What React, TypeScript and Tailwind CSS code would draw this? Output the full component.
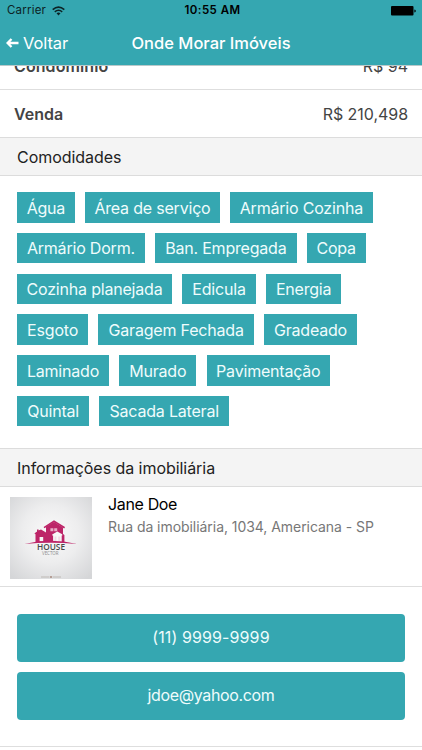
const amenities = [
  { name: "Água", width: "w-[57.8px]" },
  { name: "Área de serviço", width: "w-[134.8px]" },
  { name: "Armário Cozinha", width: "w-[142.5px]" },
  { name: "Armário Dorm.", width: "w-[127.8px]" },
  { name: "Ban. Empregada", width: "w-[141.5px]" },
  { name: "Copa", width: "w-[58.8px]" },
  { name: "Cozinha planejada", width: "w-[155px]" },
  { name: "Edicula", width: "w-[73.5px]" },
  { name: "Energia", width: "w-[75.2px]" },
  { name: "Esgoto", width: "w-[71.2px]" },
  { name: "Garagem Fechada", width: "w-[155.4px]" },
  { name: "Gradeado", width: "w-[92.8px]" },
  { name: "Laminado", width: "w-[92px]" },
  { name: "Murado", width: "w-[77px]" },
  { name: "Pavimentação", width: "w-[123.6px]" },
  { name: "Quintal", width: "w-[72.2px]" },
  { name: "Sacada Lateral", width: "w-[129.5px]" },
];

function WifiIcon() {
  return (
    <svg viewBox="0 0 13 10" className="mb-px h-2.5 w-[13px]" fill="none" stroke="currentColor" strokeWidth="1.6">
      <path d="M0.7 3.6Q6.5 -1.4 12.3 3.6" />
      <path d="M2.8 5.9Q6.5 2.6 10.2 5.9" />
      <path d="M4.5 7.3Q6.5 5.7 8.5 7.3L6.5 9.5Z" fill="currentColor" stroke="none" />
    </svg>
  );
}

function HouseLogo() {
  return (
    <svg viewBox="0 0 82 82" className="h-[82px] w-[82px] shrink-0">
      <defs>
        <radialGradient id="paper" cx="50%" cy="45%" r="70%">
          <stop offset="0" stopColor="#fafafa" />
          <stop offset="0.5" stopColor="#ededee" />
          <stop offset="1" stopColor="#d5d6d8" />
        </radialGradient>
      </defs>
      <rect width="82" height="82" fill="url(#paper)" />
      {/* main house */}
      <path d="M36 29.8L44 24.9L53 30.5V45.5H36Z" fill="#bd2568" />
      <path d="M34 30.6L44 24.3L54.6 30.8" fill="none" stroke="#bd2568" strokeWidth="1.6" />
      {/* left annex */}
      <path d="M25.5 45.5V36L27 34.4V32.6H28.6V33.6L31 32.4L36 35.6V45.5Z" fill="#bd2568" />
      <path d="M24.8 36.8L30.5 33.6L35.5 36.8" fill="none" stroke="#bd2568" strokeWidth="1.2" />
      {/* windows */}
      <path d="M40.4 31.3H43.4V34.2H40.4ZM44.2 31.3H47.2V34.2H44.2Z" fill="#e7adc6" />
      <path d="M29.6 40H33.2V44.3H29.6Z" fill="#f5f5f5" />
      {/* garage */}
      <path d="M42.2 37.4L47.3 34.5L52.6 37.4V38.4H51.7V45H43.1V38.4H42.2Z" fill="#f8f8f8" />
      <path d="M44.5 39.6H46.4V44.8H44.5ZM48.2 39.6H50.2V44.8H48.2Z" fill="#f1dce5" />
      <path d="M52.5 36.5L54.4 38V45.5H52.5Z" fill="#bd2568" />
      {/* ground */}
      <path d="M14.5 47Q40.5 40.5 67 47Q40.5 43.8 14.5 47Z" fill="#bd2568" />
      <text x="27" y="53.4" textLength="28" lengthAdjust="spacingAndGlyphs" fontSize="9" fontWeight="600" fill="#484849" fontFamily="Open Sans, sans-serif">
        HOUSE
      </text>
      <text x="32" y="58" textLength="16.5" lengthAdjust="spacingAndGlyphs" fontSize="5" fill="#8a8a8a" fontFamily="Open Sans, sans-serif">
        VECTOR
      </text>
      <path d="M31 80H39.5M42.5 80H51" stroke="#b5aea9" strokeWidth="0.8" />
      <circle cx="41" cy="80" r="0.8" fill="#7d4a35" />
    </svg>
  );
}

function SectionTitle({ children }: { children: string }) {
  return (
    <h2 className="flex h-[38.5px] items-center border-y border-[#dcdcdc] bg-[#f4f4f4] pt-[0.5px] pl-[17px] text-base tracking-[-0.05px] text-[#222]">
      {children}
    </h2>
  );
}

export default function App() {
  return (
    <div className="flex h-[750px] w-full flex-col overflow-hidden bg-white font-['Inter',sans-serif] text-base text-[#444]">
      <header className="h-[65px] shrink-0 bg-[#35a7b1]">
        {/* Status bar */}
        <div className="grid h-[22px] grid-cols-3 items-center pr-1.5 pl-[7px] text-[#0c2325]">
          <div className="flex items-center gap-1.5 text-[11.5px] tracking-[0.2px]">
            Carrier
            <WifiIcon />
          </div>
          <div className="pl-0.5 text-center text-[11.5px] font-semibold tracking-[0.45px] text-black">
            10:55 AM
          </div>
          <svg viewBox="0 0 25 10" className="h-2.5 w-[25px] justify-self-end">
            <rect width="22.5" height="9.5" rx="1" />
            <path d="M23.4 3.5C25.2 3.7 25.2 6.3 23.4 6.5Z" />
          </svg>
        </div>
        {/* Navigation */}
        <div className="grid h-[43px] grid-cols-[100px_1fr_100px] items-center text-white">
          <button className="flex items-center gap-1 pl-1.5 text-[16.5px] tracking-[-0.1px]">
            <svg viewBox="0 0 13 10" className="mb-px h-2.5 w-[13px]" fill="none" stroke="currentColor" strokeWidth="2.3">
              <path d="M5.5 1L1.6 5L5.5 9M1.6 5H12.5" />
            </svg>
            Voltar
          </button>
          <h1 className="text-center text-[16.5px] font-medium whitespace-nowrap">
            Onde Morar Imóveis
          </h1>
        </div>
      </header>

      <main className="flex flex-1 flex-col overflow-hidden border-t border-[#b9c9ca]">
        <div className="flex h-6 shrink-0 items-end justify-between overflow-hidden border-b border-[#dedede] px-3.5 pb-[11px]">
          <span className="font-semibold tracking-[0.1px]">Condomínio</span>
          <span>R$ 94</span>
        </div>
        <div className="flex h-[47px] shrink-0 items-center justify-between px-3.5 pt-px">
          <span className="font-semibold">Venda</span>
          <span className="tracking-[-0.05px]">R$ 210,498</span>
        </div>

        <SectionTitle>Comodidades</SectionTitle>
        <ul className="flex h-[272.5px] shrink-0 flex-wrap content-start gap-[10.25px] pt-[16.5px] pr-3 pl-[17px]">
          {amenities.map((item) => (
            <li
              key={item.name}
              className={`flex h-[30.5px] items-center justify-center bg-[#35a7b1] pt-[0.5px] tracking-[-0.2px] whitespace-nowrap text-[#effcfc] ${item.width}`}
            >
              {item.name}
            </li>
          ))}
        </ul>

        <SectionTitle>Informações da imobiliária</SectionTitle>
        <div className="flex h-[100px] shrink-0 gap-4 border-b border-[#dedede] pt-2.5 pl-2.5">
          <HouseLogo />
          <div>
            <h3 className="-mt-px leading-4 tracking-[-0.35px] text-black">Jane Doe</h3>
            <p className="mt-[5px] text-sm tracking-[-0.05px] text-[#777]">
              Rua da imobiliária, 1034, Americana - SP
            </p>
          </div>
        </div>

        <div className="flex h-[160px] shrink-0 flex-col gap-2.5 border-b border-[#dedede] px-[17px] pt-[27px]">
          <button className="h-12 rounded bg-[#35a7b1] pb-0.5 tracking-[0.1px] text-[#effcfc]">(11) 9999-9999</button>
          <button className="h-12 rounded bg-[#35a7b1] pb-0.5 tracking-[-0.35px] text-[#effcfc]">jdoe@yahoo.com</button>
        </div>
      </main>
    </div>
  );
}
